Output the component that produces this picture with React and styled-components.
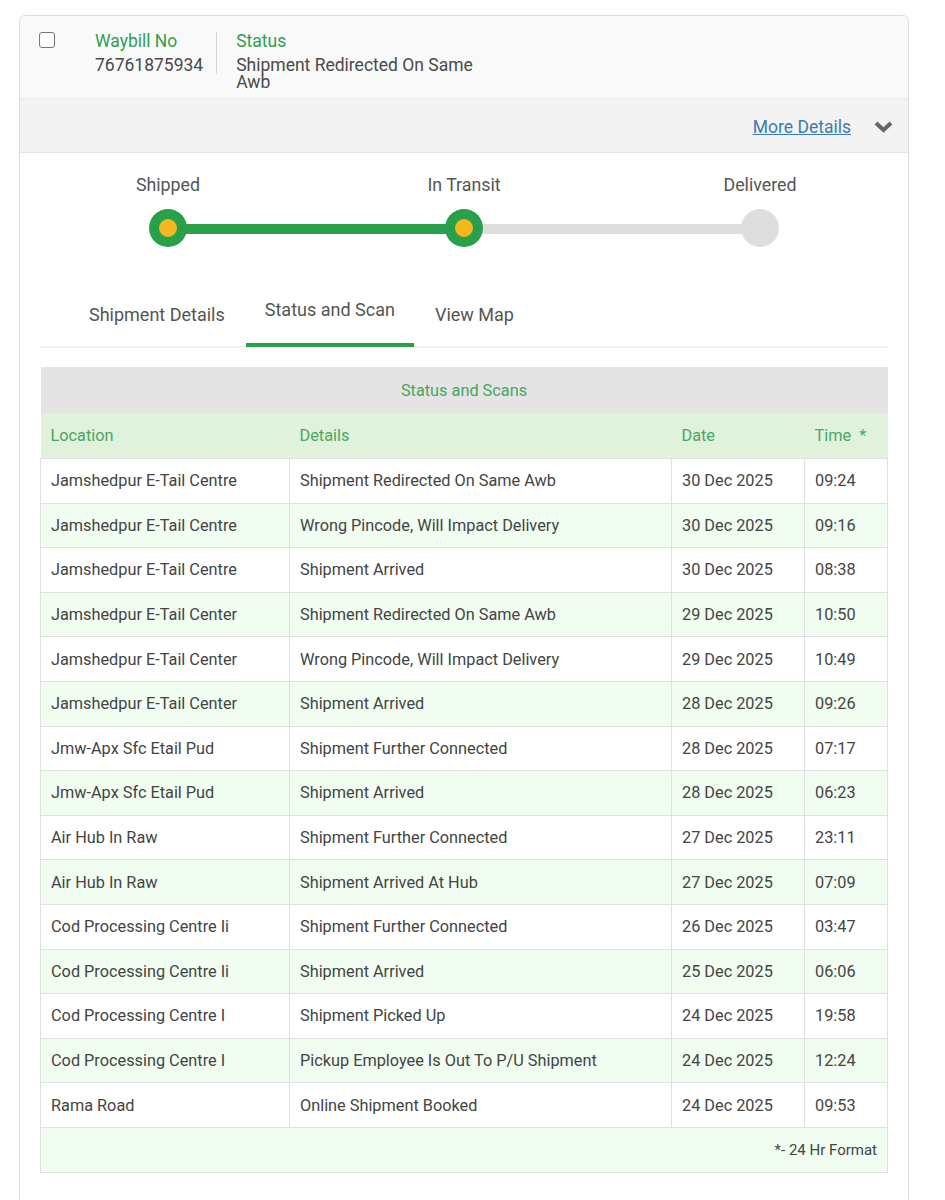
import React from 'react';
import styled, { createGlobalStyle } from 'styled-components';

const GlobalStyle = createGlobalStyle`
    body {
        margin: 0;
        background: #ffffff;
        font-family: Roboto, "Liberation Sans", sans-serif;
        color: #444444;
    }
`

const Page = styled.div`
    padding: 15px 36px 0 19px;
`

const Card = styled.div`
    border: 1px solid #dcdcdc;
    border-bottom: none;
    border-radius: 6px 6px 0 0;
    background: #ffffff;
    height: 1200px;
`

const Header = styled.div`
    display: flex;
    align-items: flex-start;
    background: #f9f9f9;
    border-radius: 6px 6px 0 0;
    padding: 16px 0 6px 19px;
    height: 60px;
`

const Check = styled.div`
    width: 14px;
    height: 14px;
    border: 1.5px solid #777;
    border-radius: 3px;
    background: #fff;
`

const Field = styled.div`
    display: flex;
    flex-direction: column;
    padding: 0 ${p => p.$pr || 0}px 0 ${p => p.$pl || 0}px;
    max-width: ${p => p.$max || 'none'};
    border-right: ${p => p.$divider ? '1px solid #d6d6d6' : 'none'};
`

const Label = styled.span`
    color: #2f9e4f;
    font-size: 17.5px;
    line-height: 19px;
`

const Value = styled.span`
    color: #4a4a4a;
    font-size: 17.5px;
    line-height: 17px;
    margin-top: 6px;
`

const DetailsBar = styled.div`
    display: flex;
    justify-content: flex-end;
    align-items: center;
    height: 55px;
    background: #f3f3f3;
    border-top: 1px solid #ececec;
    border-bottom: 1px solid #e4e4e4;
    padding: 2px 15px 0 0;
    box-sizing: border-box;
    gap: 23px;
`

const MoreLink = styled.a`
    color: #3b7bb5;
    font-size: 17.5px;
    text-decoration: underline;
    cursor: pointer;
`

const Stepper = styled.div`
    display: grid;
    grid-template-columns: repeat(3, 1fr);
    padding-top: 21px;
`

const Step = styled.div`
    position: relative;
    display: flex;
    flex-direction: column;
    align-items: center;
`

const StepLabel = styled.span`
    font-size: 17.8px;
    color: #555;
    line-height: 21px;
`

const Track = styled.div`
    position: absolute;
    top: 50px;
    left: ${p => p.$side === 'right' ? '50%' : '0'};
    right: ${p => p.$side === 'left' ? '50%' : '0'};
    height: 10px;
    background: ${p => p.$done ? '#28a04a' : '#dedede'};
`

const Dot = styled.div`
    position: relative;
    z-index: 1;
    margin-top: 14px;
    width: 38px;
    height: 38px;
    border-radius: 50%;
    background: ${p => p.$done ? '#28a04a' : '#dedede'};
    display: flex;
    align-items: center;
    justify-content: center;
    &::after {
        content: '';
        display: ${p => p.$done ? 'block' : 'none'};
        width: 18px;
        height: 18px;
        border-radius: 50%;
        background: #f6b81f;
    }
`

const Body = styled.div`
    padding: 0 20px;
`

const Tabs = styled.div`
    display: flex;
    margin-top: 52px;
    padding-left: 28px;
    border-bottom: 2px solid #f1f1f1;
`

const Tab = styled.div`
    padding: ${p => p.$active ? '0 19px 23px' : '5px 21px 18px'};
    font-size: 18px;
    line-height: 21px;
    color: #555;
    border-bottom: 4px solid ${p => p.$active ? '#28a04a' : 'transparent'};
    margin-bottom: -1px;
`

const Table = styled.table`
    width: 100%;
    border-collapse: collapse;
    margin-top: 19px;
    font-size: 16.3px;
    color: #444;
`

const Caption = styled.th`
    background: #e4e4e4;
    color: #47a562;
    font-weight: 400;
    font-size: 16.3px;
    height: 44px;
    text-align: center;
`

const HeadCell = styled.th`
    background: #e0f1dc;
    color: #49a865;
    font-weight: 400;
    font-size: 16.3px;
    text-align: left;
    padding: 0 10px;
    height: 45px;
    width: ${p => p.$w || 'auto'};
`

const Row = styled.tr`
    background: ${p => p.$alt ? '#f1fdf1' : '#ffffff'};
    height: 44.6px;
`

const Cell = styled.td`
    border: 1px solid #e0e0e0;
    padding: 0 10px;
    white-space: nowrap;
`

const FootCell = styled.td`
    background: #f1fdf1;
    border: 1px solid #e0e0e0;
    text-align: right;
    padding: 0 10px;
    height: 44px;
    font-size: 15px;
`

const rows = [
    ['Jamshedpur E-Tail Centre', 'Shipment Redirected On Same Awb', '30 Dec 2025', '09:24'],
    ['Jamshedpur E-Tail Centre', 'Wrong Pincode, Will Impact Delivery', '30 Dec 2025', '09:16'],
    ['Jamshedpur E-Tail Centre', 'Shipment Arrived', '30 Dec 2025', '08:38'],
    ['Jamshedpur E-Tail Center', 'Shipment Redirected On Same Awb', '29 Dec 2025', '10:50'],
    ['Jamshedpur E-Tail Center', 'Wrong Pincode, Will Impact Delivery', '29 Dec 2025', '10:49'],
    ['Jamshedpur E-Tail Center', 'Shipment Arrived', '28 Dec 2025', '09:26'],
    ['Jmw-Apx Sfc Etail Pud', 'Shipment Further Connected', '28 Dec 2025', '07:17'],
    ['Jmw-Apx Sfc Etail Pud', 'Shipment Arrived', '28 Dec 2025', '06:23'],
    ['Air Hub In Raw', 'Shipment Further Connected', '27 Dec 2025', '23:11'],
    ['Air Hub In Raw', 'Shipment Arrived At Hub', '27 Dec 2025', '07:09'],
    ['Cod Processing Centre Ii', 'Shipment Further Connected', '26 Dec 2025', '03:47'],
    ['Cod Processing Centre Ii', 'Shipment Arrived', '25 Dec 2025', '06:06'],
    ['Cod Processing Centre I', 'Shipment Picked Up', '24 Dec 2025', '19:58'],
    ['Cod Processing Centre I', 'Pickup Employee Is Out To P/U Shipment', '24 Dec 2025', '12:24'],
    ['Rama Road', 'Online Shipment Booked', '24 Dec 2025', '09:53'],
];

const steps = [
    { name: 'Shipped', done: true, right: true },
    { name: 'In Transit', done: true, right: false },
    { name: 'Delivered', done: false, right: false },
];

function Chevron() {
    return (
        <svg width="19" height="13" viewBox="0 0 19 13">
            <path d="M2 3 L9.5 10 L17 3" fill="none" stroke="#666" strokeWidth="4" strokeLinecap="butt" strokeLinejoin="miter" />
        </svg>
    );
}

export default function App() {
    return (
        <Page>
            <GlobalStyle />
            <Card>
                <Header>
                    <Check />
                    <Field $pl={40} $pr={13} $divider>
                        <Label>Waybill No</Label>
                        <Value>76761875934</Value>
                    </Field>
                    <Field $pl={19} $max="262px">
                        <Label>Status</Label>
                        <Value>Shipment Redirected On Same Awb</Value>
                    </Field>
                </Header>
                <DetailsBar>
                    <MoreLink>More Details</MoreLink>
                    <Chevron />
                </DetailsBar>
                <Stepper>
                    {steps.map((s, i) => (
                        <Step key={s.name}>
                            {i > 0 && <Track $side="left" $done={steps[i - 1].right} />}
                            {i < steps.length - 1 && <Track $side="right" $done={s.right} />}
                            <StepLabel>{s.name}</StepLabel>
                            <Dot $done={s.done} />
                        </Step>
                    ))}
                </Stepper>
                <Body>
                    <Tabs>
                        <Tab>Shipment Details</Tab>
                        <Tab $active>Status and Scan</Tab>
                        <Tab>View Map</Tab>
                    </Tabs>
                    <Table>
                        <thead>
                            <tr><Caption colSpan={4}>Status and Scans</Caption></tr>
                            <tr>
                                <HeadCell $w="229px">Location</HeadCell>
                                <HeadCell>Details</HeadCell>
                                <HeadCell $w="113px">Date</HeadCell>
                                <HeadCell $w="63px">Time &nbsp;*</HeadCell>
                            </tr>
                        </thead>
                        <tbody>
                            {rows.map((r, i) => (
                                <Row key={i} $alt={i % 2 === 1}>
                                    {r.map((c, j) => <Cell key={j}>{c}</Cell>)}
                                </Row>
                            ))}
                            <tr><FootCell colSpan={4}>*- 24 Hr Format</FootCell></tr>
                        </tbody>
                    </Table>
                </Body>
            </Card>
        </Page>
    );
}
